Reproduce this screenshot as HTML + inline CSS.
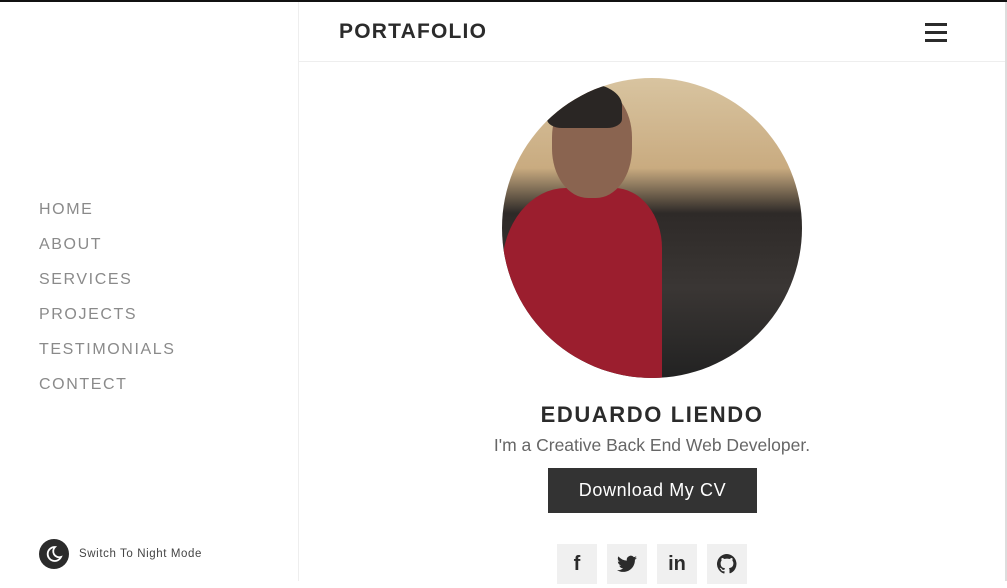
<!DOCTYPE html>
<html><head><meta charset="utf-8"><style>
*{margin:0;padding:0;box-sizing:border-box}
body{width:1007px;height:581px;overflow:hidden;background:#fff;font-family:"Liberation Sans",sans-serif;position:relative}
.tb{position:absolute;left:0;top:0;width:1007px;height:2px;background:#111}
.side{position:absolute;left:0;top:2px;width:299px;height:579px;border-right:1px solid #eee}
.nav{position:absolute;left:39px;top:199px}
.nav div{font-size:16px;letter-spacing:1.6px;color:#8a8a8a;height:35px;line-height:18px}
.night{position:absolute;left:39px;top:539px;display:flex;align-items:center}
.moon{width:30px;height:30px;border-radius:50%;background:#2b2b2b;position:relative}
.night span{font-size:11.5px;color:#444;margin-left:10px;letter-spacing:.6px}
.top{position:absolute;left:299px;top:2px;right:2px;height:60px;border-bottom:1px solid #eee}
.logo{position:absolute;left:40px;top:18px;font-weight:bold;font-size:21px;color:#2b2b2b;letter-spacing:1.2px}
.burger{position:absolute;left:626px;top:21px;width:22px}
.burger i{display:block;height:3px;background:#2b2b2b;margin-bottom:5px}
.rb{position:absolute;right:0;top:2px;width:2px;height:579px;background:#ddd}
.photo{position:absolute;left:502px;top:78px;width:300px;height:300px;border-radius:50%;overflow:hidden;
background:linear-gradient(180deg,#d8c4a0 0%,#c9ab80 30%,#2e2a28 45%,#3a3634 70%,#222 100%)}
.shirt{position:absolute;left:0;top:110px;width:160px;height:200px;background:#9b1e2e;border-radius:40% 30% 0 0}
.head{position:absolute;left:50px;top:10px;width:80px;height:110px;background:#8a6450;border-radius:45%}
.hair{position:absolute;left:45px;top:5px;width:75px;height:45px;background:#2a2624;border-radius:50% 50% 20% 20%}
h1{position:absolute;left:299px;width:706px;top:402px;text-align:center;font-size:22px;letter-spacing:1.6px;color:#2b2b2b}
.sub{position:absolute;left:299px;width:706px;top:435px;text-align:center;font-size:17.5px;color:#666}
.btn{position:absolute;left:548px;top:468px;width:209px;height:45px;background:#333;color:#fff;font-size:18px;text-align:center;line-height:45px;letter-spacing:.6px}
.soc{position:absolute;top:544px;width:40px;height:40px;background:#f0f0f0;color:#2b2b2b;font-weight:bold;text-align:center;line-height:40px;font-size:20px}
</style></head><body>
<div class="tb"></div>
<div class="side">
<div class="nav"><div>HOME</div><div>ABOUT</div><div>SERVICES</div><div>PROJECTS</div><div>TESTIMONIALS</div><div>CONTECT</div></div>
</div>
<div class="night"><div class="moon"><svg width="30" height="30" viewBox="0 0 30 30"><path d="M16 8a7 7 0 1 0 6 10a6 6 0 0 1-6-10z" fill="none" stroke="#fff" stroke-width="1.8"/></svg></div><span>Switch To Night Mode</span></div>
<div class="top"><div class="logo">PORTAFOLIO</div><div class="burger"><i></i><i></i><i></i></div></div>
<div class="rb"></div>
<div class="photo"><div class="shirt"></div><div class="head"></div><div class="hair"></div></div>
<h1>EDUARDO LIENDO</h1>
<div class="sub">I'm a Creative Back End Web Developer.</div>
<div class="btn">Download My CV</div>
<div class="soc" style="left:557px">f</div>
<div class="soc" style="left:607px"><svg width="20" height="18" viewBox="0 0 24 20" style="margin-top:11px"><path d="M24 2.4a10 10 0 0 1-2.8.8A5 5 0 0 0 23.3.5a10 10 0 0 1-3.1 1.2A4.9 4.9 0 0 0 11.8 6 14 14 0 0 1 1.7.9a4.9 4.9 0 0 0 1.5 6.6A5 5 0 0 1 1 6.9a4.9 4.9 0 0 0 3.9 4.8 5 5 0 0 1-2.2.1 4.9 4.9 0 0 0 4.6 3.4A9.9 9.9 0 0 1 0 17.3 14 14 0 0 0 7.5 19.5c9.1 0 14-7.5 14-14v-.6A10 10 0 0 0 24 2.4z" fill="#2b2b2b"/></svg></div>
<div class="soc" style="left:657px">in</div>
<div class="soc" style="left:707px"><svg width="20" height="20" viewBox="0 0 16 16" style="margin-top:10px"><path d="M8 0a8 8 0 0 0-2.5 15.6c.4 0 .5-.2.5-.4v-1.5c-2.2.5-2.7-1-2.7-1-.4-.9-.9-1.2-.9-1.2-.7-.5.1-.5.1-.5.8.1 1.200.8 1.2.8.7 1.3 1.9.9 2.3.7.1-.5.3-.9.5-1.1-1.8-.2-3.600-.9-3.600-4 0-.9.3-1.6.8-2.1-.1-.2-.4-1 .1-2.1 0 0 .7-.2 2.2.8a7.4 7.4 0 0 1 4 0c1.5-1 2.2-.8 2.2-.8.4 1.1.2 1.9.1 2.1.5.6.8 1.3.8 2.1 0 3.1-1.9 3.7-3.6 3.9.3.3.5.8.5 1.5v2.2c0 .2.1.5.6.4A8 8 0 0 0 8 0z" fill="#2b2b2b"/></svg></div>
</body></html>
